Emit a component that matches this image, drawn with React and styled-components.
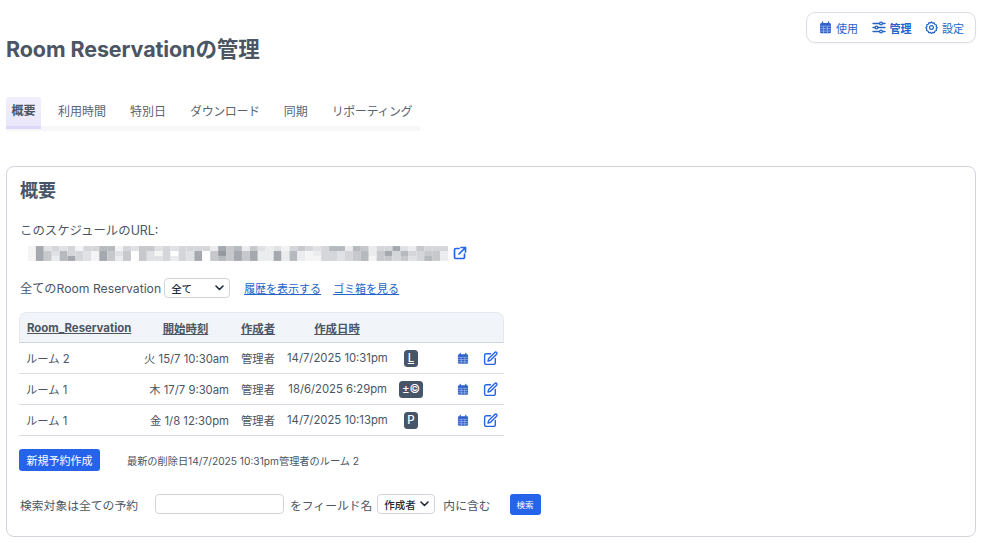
import React from "react";
import styled, { createGlobalStyle } from "styled-components";

const Global = createGlobalStyle`
  html, body { margin: 0; padding: 0; background: #fff; }
  body { font-family: Inter, "Noto Sans CJK JP", sans-serif; color: #4b5563; font-size: 13px; }
  * { box-sizing: border-box; }
`;
const Page = styled.div`
  width: 984px; height: 543px; padding: 12px 8px 0 6px; overflow: hidden;
`;
const Header = styled.header`
  display: flex; justify-content: space-between; align-items: flex-start; height: 85px;
`;
const Title = styled.h1`
  margin: 24px 0 0; font-size: 21.500px; line-height: 27px; font-weight: 700; color: #4b5563; letter-spacing: -0.100px;
`;
const TopNav = styled.nav`
  display: flex; align-items: center; gap: 13.500px; height: 31px; padding: 0 11px 0 12px;
  border: 1px solid #d9dee5; border-radius: 9px; box-shadow: 0 1px 2px rgba(15,23,42,.04);
`;
const TopLink = styled.a`
  display: flex; align-items: center; gap: 4px; font-size: 11px; color: #2563c9;
  font-weight: ${p => (p.$active ? 700 : 400)};
  svg { display: block; }
`;
const Tabs = styled.div`
  display: flex; width: 414px; height: 34px; border-bottom: 5px solid #f6f7f8;
`;
const Tab = styled.div`
  height: 32px; padding: 0 ${p => (p.$active ? "5.500px" : "12px")}; margin-right: ${p => (p.$active ? "5px" : "0")};
  display: flex; align-items: center; font-size: 12px; padding-bottom: 5px; white-space: nowrap;
  letter-spacing: ${p => (p.$kana ? "-0.400px" : "0")};
  color: ${p => (p.$active ? "#4b5563" : "#5b6472")}; font-weight: ${p => (p.$active ? 700 : 400)};
  background: ${p => (p.$active ? "linear-gradient(#f1eefc, #ebe7fb)" : "transparent")};
  border-bottom: ${p => (p.$active ? "3px solid #ddd7f8" : "none")};
  border-radius: 3px 3px 0 0;
`;
const Card = styled.section`
  margin-top: 35px; width: 970px; height: 371px; padding: 12px 13px;
  border: 1px solid #d1d5db; border-radius: 8px;
`;
const CardTitle = styled.h2`
  margin: 0; font-size: 18px; line-height: 24px; font-weight: 700; color: #475569;
`;
const Label = styled.div`
  margin-top: 19px; font-size: 12.400px; line-height: 18px; color: #4b5563;
`;
const UrlRow = styled.div`
  display: flex; align-items: center; gap: 5px; margin-top: 4px; height: 18px;
  svg { display: block; }
`;
const MosaicBox = styled.svg`
  filter: blur(0.600px);
`;
const FilterRow = styled.div`
  display: flex; align-items: center; margin-top: 15px; height: 22px; font-size: 12.200px;
`;
const Sel = styled.div`
  display: flex; align-items: center; justify-content: space-between;
  width: ${p => p.$w}px; height: ${p => p.$h || 20}px; margin: 0 ${p => p.$mr || 0}px 0 ${p => p.$ml || 0}px;
  padding: 0 5px 0 6px; border: 1px solid #d1d5db; border-radius: 4px; background: #fff;
  font-size: 10.500px; color: #1f2937; font-weight: 500;
`;
const TextLink = styled.a`
  color: #2563c9; text-decoration: underline; font-size: 11px; margin-right: ${p => p.$mr || 0}px;
`;
const Table = styled.table`
  margin: 13px 0 0 -1px; width: 485px; border-collapse: separate; border-spacing: 0; table-layout: fixed; font-size: 11.300px;
`;
const Th = styled.th`
  height: 31px; padding: 0; background: #f1f5f9; border-bottom: 1px solid #d1d5db; border-top: 1px solid #e5e9ef;
  font-size: 11.400px; font-weight: 700; color: #4b5563; text-decoration: underline;
  text-align: ${p => p.$align || "center"}; padding-left: ${p => p.$pl || 0}px;
  &:first-child { border-radius: 8px 0 0 0; border-left: 1px solid #e5e9ef; }
  &:last-child { border-radius: 0 8px 0 0; border-right: 1px solid #e5e9ef; }
`;
const Td = styled.td`
  height: 31px; padding: 0 ${p => p.$pr || 0}px 0 ${p => p.$pl || 0}px; border-bottom: 1px solid #d9dde3; color: #4b5563;
  text-align: ${p => p.$align || "left"}; white-space: nowrap;
  svg { display: inline-block; vertical-align: middle; }
`;
const Badge = styled.span`
  display: inline-flex; align-items: center; justify-content: center; height: 17px;
  padding: 0 3px; min-width: 14px; border-radius: 3.500px; background: #475569; color: #fff; font-size: 11.500px; font-weight: 500;
  text-decoration: ${p => (p.$under ? "underline" : "none")};
`;
const Actions = styled.div`
  display: flex; align-items: center; margin-top: 13px; height: 22px;
`;
const Primary = styled.button`
  height: ${p => p.$h}px; width: ${p => p.$w}px; margin: 0 ${p => p.$mr || 0}px 0 ${p => p.$ml || 0}px; padding: 0; border: 0; border-radius: 3px;
  background: #2563eb; color: #fff; font: 400 ${p => p.$fs}px Inter, "Noto Sans CJK JP", sans-serif;
`;
const Note = styled.span`
  font-size: 10.200px; color: #4b5563;
`;
const SearchRow = styled.div`
  display: flex; align-items: center; margin-top: 22px; height: 22px; font-size: 11.800px;
`;
const Input = styled.div`
  width: 129px; height: 20px; margin: 0 6px 0 17px; border: 1px solid #d1d5db; border-radius: 4px;
`;

const Calendar = ({ w = 13, h = 13 }) => (
  <svg width={w} height={h} viewBox="0 0 13 13" fill="none">
    <path d="M3.500.8v2M9.500.8v2" stroke="#2563c9" strokeWidth="1.300" strokeLinecap="round" />
    <rect x="1" y="2" width="11" height="10.300" rx="1.500" fill="#2f62c4" />
    <path d="M1 5.200h11M1 7.700h11M1 10.100h11M4.600 5.200v7M8.400 5.200v7" stroke="#a9c0ee" strokeWidth=".7" />
  </svg>
);
const Sliders = () => (
  <svg width="14" height="13" viewBox="0 0 14 13" fill="none" stroke="#2563c9" strokeWidth="1.300" strokeLinecap="round">
    <path d="M1 2.500h6.500M10.500 2.500H13M1 6.500h2M6 6.500h7M1 10.500h6.500M10.500 10.500H13" />
    <circle cx="9" cy="2.500" r="1.400" /><circle cx="4.500" cy="6.500" r="1.400" /><circle cx="9" cy="10.500" r="1.400" />
  </svg>
);
const Gear = () => (
  <svg width="13" height="13" viewBox="0 0 13 13" fill="none" stroke="#2563c9" strokeWidth="1.200" strokeLinejoin="round">
    <path d="M6.500.9l1.100 1.300 1.700-.3.600 1.600 1.600.6-.3 1.700 1.100.7-1.100 1.300.3 1.700-1.600.6-.6 1.600-1.700-.3-1.100 1.200-1.100-1.200-1.700.3-.6-1.600-1.600-.6.3-1.700L.9 6.500 2 5.500l-.3-1.700 1.600-.6.6-1.600 1.700.3z" />
    <circle cx="6.500" cy="6.500" r="1.900" />
  </svg>
);
const External = () => (
  <svg width="14" height="14" viewBox="0 0 14 14" fill="none" stroke="#2563eb" strokeWidth="1.700" strokeLinecap="round" strokeLinejoin="round">
    <path d="M6 2.500H3A1.500 1.500 0 0 0 1.500 4v7A1.500 1.500 0 0 0 3 12.500h7A1.500 1.500 0 0 0 11.500 11V8M8 1.500h4.500V6M12.500 1.500L6 8" />
  </svg>
);
const Edit = () => (
  <svg width="15" height="15" viewBox="0 0 14 14" fill="none" stroke="#2563eb" strokeWidth="1.300" strokeLinecap="round" strokeLinejoin="round">
    <path d="M7 2.500H3A1.500 1.500 0 0 0 1.500 4v7A1.500 1.500 0 0 0 3 12.500h7A1.500 1.500 0 0 0 11.500 11V7" />
    <path d="M11 1.300a1.200 1.200 0 0 1 1.700 1.700L7 8.700l-2.300.6.600-2.300z" />
  </svg>
);
const Chevron = () => (
  <svg width="9" height="6" viewBox="0 0 9 6" fill="none" stroke="#1f2937" strokeWidth="1.600" strokeLinecap="round" strokeLinejoin="round">
    <path d="M1 1l3.500 3.500L8 1" />
  </svg>
);

const shades = ["#ffffff","#f4f4f5","#ebecee","#e0e1e4","#d4d6d9","#c6c8cc","#b6b9be","#a5a9af","#94989f"];
const hash = (x, y) => {
  let h = (x * 374761393 + y * 668265263) | 0;
  h = Math.imul(h ^ (h >>> 13), 1274126177);
  return ((h ^ (h >>> 16)) >>> 0) / 4294967296;
};
const Mosaic = () => {
  const cells = [];
  for (let x = 0; x < 54; x++) {
    for (let y = 0; y < 3; y++) {
      const row = y === 2 && hash(x, 77) < 0.5 ? 1 : y;
      const v = Math.min(8, Math.floor((hash(x + 3, row + 5) + hash(x + 90, 31)) * 4.500));
      cells.push(<rect key={x + "-" + y} x={x * 8} y={y * 5} width="8" height="5" fill={shades[v]} />);
    }
  }
  return <MosaicBox width="428" height="15" viewBox="0 0 432 15" aria-hidden="true">{cells}</MosaicBox>;
};

const rows = [
  { room: "ルーム 2", start: "火 15/7 10:30am", made: "14/7/2025 10:31pm", badge: "L", under: true },
  { room: "ルーム 1", start: "木 17/7 9:30am", made: "18/6/2025 6:29pm", badge: "±©" },
  { room: "ルーム 1", start: "金 1/8 12:30pm", made: "14/7/2025 10:13pm", badge: "P" },
];
const Col = styled.col`
  width: ${p => p.$w}px;
`;

export default function App() {
  return (
    <Page>
      <Global />
      <Header>
        <Title>Room Reservationの管理</Title>
        <TopNav>
          <TopLink><Calendar />使用</TopLink>
          <TopLink $active><Sliders />管理</TopLink>
          <TopLink><Gear />設定</TopLink>
        </TopNav>
      </Header>
      <Tabs>
        <Tab $active>概要</Tab>
        <Tab>利用時間</Tab>
        <Tab>特別日</Tab>
        <Tab $kana>ダウンロード</Tab>
        <Tab>同期</Tab>
        <Tab $kana>リポーティング</Tab>
      </Tabs>
      <Card>
        <CardTitle>概要</CardTitle>
        <Label>このスケジュールのURL:</Label>
        <UrlRow><Mosaic /><External /></UrlRow>
        <FilterRow>
          全てのRoom Reservation
          <Sel $w={66} $ml={3} $mr={14}>全て<Chevron /></Sel>
          <TextLink $mr={12}>履歴を表示する</TextLink>
          <TextLink>ゴミ箱を見る</TextLink>
        </FilterRow>
        <Table>
          <colgroup>
            <Col $w={123} /><Col $w={87} /><Col $w={58} />
            <Col $w={100} /><Col $w={48} /><Col $w={41} /><Col $w={28} />
          </colgroup>
          <thead>
            <tr>
              <Th $align="left" $pl={7}>Room_Reservation</Th>
              <Th>開始時刻</Th>
              <Th>作成者</Th>
              <Th>作成日時</Th>
              <Th /><Th /><Th />
            </tr>
          </thead>
          <tbody>
            {rows.map((r, i) => (
              <tr key={i}>
                <Td $pl={7}>{r.room}</Td>
                <Td $align="right">{r.start}</Td>
                <Td $align="center">管理者</Td>
                <Td $align="right">{r.made}</Td>
                <Td $align="center"><Badge $under={r.under}>{r.badge}</Badge></Td>
                <Td $align="right" $pr={7}><Calendar w={12} h={13} /></Td>
                <Td $align="center"><Edit /></Td>
              </tr>
            ))}
          </tbody>
        </Table>
        <Actions>
          <Primary $w={81} $h={22} $fs={11} $mr={27} $ml={-1}>新規予約作成</Primary>
          <Note>最新の削除日14/7/2025 10:31pm管理者のルーム 2</Note>
        </Actions>
        <SearchRow>
          検索対象は全ての予約
          <Input />
          をフィールド名
          <Sel $w={58} $ml={5} $mr={8}>作成者<Chevron /></Sel>
          内に含む
          <Primary $w={31} $h={21} $fs={8.500} $ml={19}>検索</Primary>
        </SearchRow>
      </Card>
    </Page>
  );
}
